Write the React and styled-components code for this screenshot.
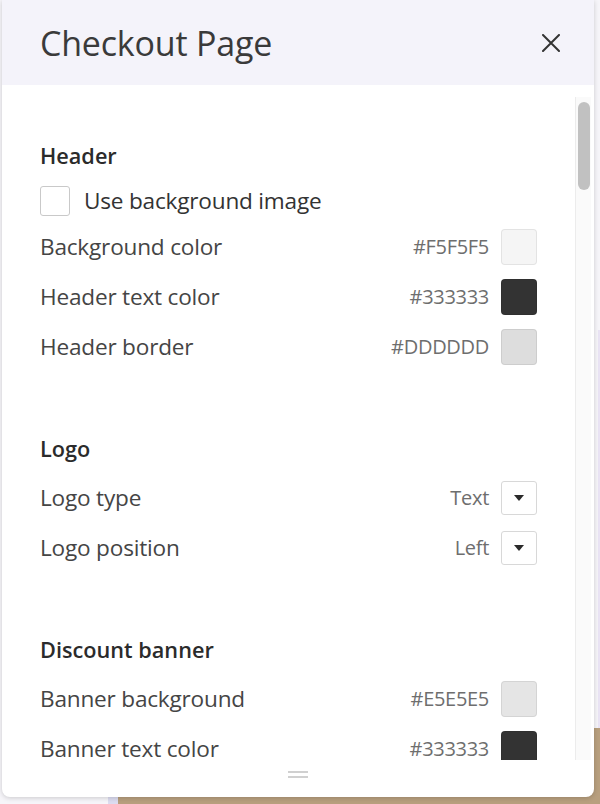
import React from 'react';
import styled, { createGlobalStyle } from 'styled-components';

const GlobalStyle = createGlobalStyle`
  html, body {
    margin: 0;
    padding: 0;
  }
  body {
    font-family: "Open Sans", "Noto Sans", sans-serif;
    color: #333;
  }
`;

const Page = styled.div`
  width: 600px;
  height: 804px;
  box-sizing: border-box;
  padding: 0 6px 7px 2px;
  background:
    linear-gradient(#b89f7e, #b89f7e) 118px 728px / 482px 76px no-repeat,
    linear-gradient(#dcdcf0, #dcdcf0) 108px 797px / 10px 7px no-repeat,
    linear-gradient(#e9e3f4, #e9e3f4) 598px 330px / 2px 400px no-repeat,
    #f6f5f9;
  overflow: hidden;
`;

const Panel = styled.div`
  height: 100%;
  display: flex;
  flex-direction: column;
  background: #fff;
  border-radius: 0 0 8px 8px;
  box-shadow: 0 1px 5px rgba(0, 0, 0, 0.18);
  overflow: hidden;
`;

const Header = styled.div`
  height: 85px;
  flex-shrink: 0;
  display: flex;
  align-items: center;
  justify-content: space-between;
  padding: 0 33px 0 38px;
  background: #f4f3fa;
`;

const Title = styled.h1`
  margin: 0;
  font-size: 34px;
  font-weight: 400;
  color: #3a3a3a;
  letter-spacing: -0.2px;
`;

const CloseButton = styled.button`
  border: none;
  background: none;
  padding: 0;
  width: 20px;
  height: 20px;
  display: flex;
  align-items: center;
  justify-content: center;
  cursor: pointer;
`;

const Body = styled.div`
  flex: 1;
  display: flex;
  flex-direction: column;
  padding-top: 12px;
  min-height: 0;
`;

const ScrollArea = styled.div`
  height: 663px;
  display: flex;
  flex-shrink: 0;
`;

const Content = styled.div`
  flex: 1;
  overflow: hidden;
  padding: 33px 38px 0 38px;
`;

const Track = styled.div`
  width: 15px;
  margin-right: 3px;
  background: #fafafa;
  border-left: 1px solid #ececec;
  display: flex;
  justify-content: center;
`;

const Thumb = styled.div`
  width: 12px;
  height: 88px;
  margin-top: 5px;
  border-radius: 6px;
  background: #c1c1c1;
`;

const Section = styled.section`
  & + & {
    margin-top: 51px;
  }
`;

const SectionTitle = styled.h2`
  margin: 0;
  height: 50px;
  display: flex;
  align-items: center;
  font-size: 21.7px;
  font-weight: 600;
  color: #2b2b2b;
`;

const Row = styled.div`
  height: ${(p) => (p.$compact ? '42px' : '50px')};
  display: flex;
  align-items: center;
  justify-content: space-between;
`;

const Label = styled.span`
  font-size: 22.6px;
  line-height: 1;
  color: #454545;
  letter-spacing: -0.2px;
`;

const CheckLabel = styled.label`
  display: flex;
  align-items: center;
  gap: 14px;
  font-size: 22.6px;
  line-height: 1.2;
  color: #333;
  letter-spacing: -0.2px;
`;

const Checkbox = styled.span`
  width: 28px;
  height: 28px;
  border: 1px solid #c9c9c9;
  border-radius: 3px;
  background: #fff;
`;

const Control = styled.div`
  display: flex;
  align-items: center;
  gap: 12px;
`;

const Value = styled.span`
  font-size: 20px;
  line-height: 1;
  color: #6e6e6e;
  letter-spacing: -0.3px;
`;

const Swatch = styled.span`
  width: 36px;
  height: 36px;
  box-sizing: border-box;
  border-radius: 4px;
  border: 1px solid rgba(0, 0, 0, 0.07);
  background: ${(p) => p.$color};
`;

const Dropdown = styled.button`
  width: 36px;
  height: 34px;
  box-sizing: border-box;
  padding: 0;
  border: 1px solid #d8d8d8;
  border-radius: 3px;
  background: #fff;
  display: flex;
  align-items: center;
  justify-content: center;
`;

const Caret = styled.span`
  width: 0;
  height: 0;
  border-left: 5px solid transparent;
  border-right: 5px solid transparent;
  border-top: 6px solid #2a2a2a;
`;

const Footer = styled.div`
  flex: 1;
  display: flex;
  justify-content: center;
  padding-top: 10px;
`;

const Handle = styled.div`
  width: 20px;
  height: 7px;
  border-top: 2px solid #d0d0d0;
  border-bottom: 2px solid #d0d0d0;
  box-sizing: border-box;
  margin-top: 1px;
`;

const sections = [
  {
    title: 'Header',
    checkbox: 'Use background image',
    rows: [
      { label: 'Background color', value: '#F5F5F5', color: '#F5F5F5' },
      { label: 'Header text color', value: '#333333', color: '#333333' },
      { label: 'Header border', value: '#DDDDDD', color: '#DDDDDD' },
    ],
  },
  {
    title: 'Logo',
    rows: [
      { label: 'Logo type', value: 'Text', select: true },
      { label: 'Logo position', value: 'Left', select: true },
    ],
  },
  {
    title: 'Discount banner',
    rows: [
      { label: 'Banner background', value: '#E5E5E5', color: '#E5E5E5' },
      { label: 'Banner text color', value: '#333333', color: '#333333' },
    ],
  },
];

const App = () => {
  return (
    <>
      <GlobalStyle />
      <Page>
        <Panel>
          <Header>
            <Title>Checkout Page</Title>
            <CloseButton aria-label="Close">
              <svg width="18" height="18" viewBox="0 0 18 18">
                <path d="M1 1L17 17M17 1L1 17" stroke="#333" strokeWidth="2" strokeLinecap="round" />
              </svg>
            </CloseButton>
          </Header>
          <Body>
            <ScrollArea>
              <Content>
                {sections.map((section) => (
                  <Section key={section.title}>
                    <SectionTitle>{section.title}</SectionTitle>
                    {section.checkbox && (
                      <Row $compact>
                        <CheckLabel>
                          <Checkbox />
                          {section.checkbox}
                        </CheckLabel>
                      </Row>
                    )}
                    {section.rows.map((row) => (
                      <Row key={row.label}>
                        <Label>{row.label}</Label>
                        <Control>
                          <Value>{row.value}</Value>
                          {row.select ? (
                            <Dropdown>
                              <Caret />
                            </Dropdown>
                          ) : (
                            <Swatch $color={row.color} />
                          )}
                        </Control>
                      </Row>
                    ))}
                  </Section>
                ))}
              </Content>
              <Track>
                <Thumb />
              </Track>
            </ScrollArea>
            <Footer>
              <Handle />
            </Footer>
          </Body>
        </Panel>
      </Page>
    </>
  );
};

export default App;
